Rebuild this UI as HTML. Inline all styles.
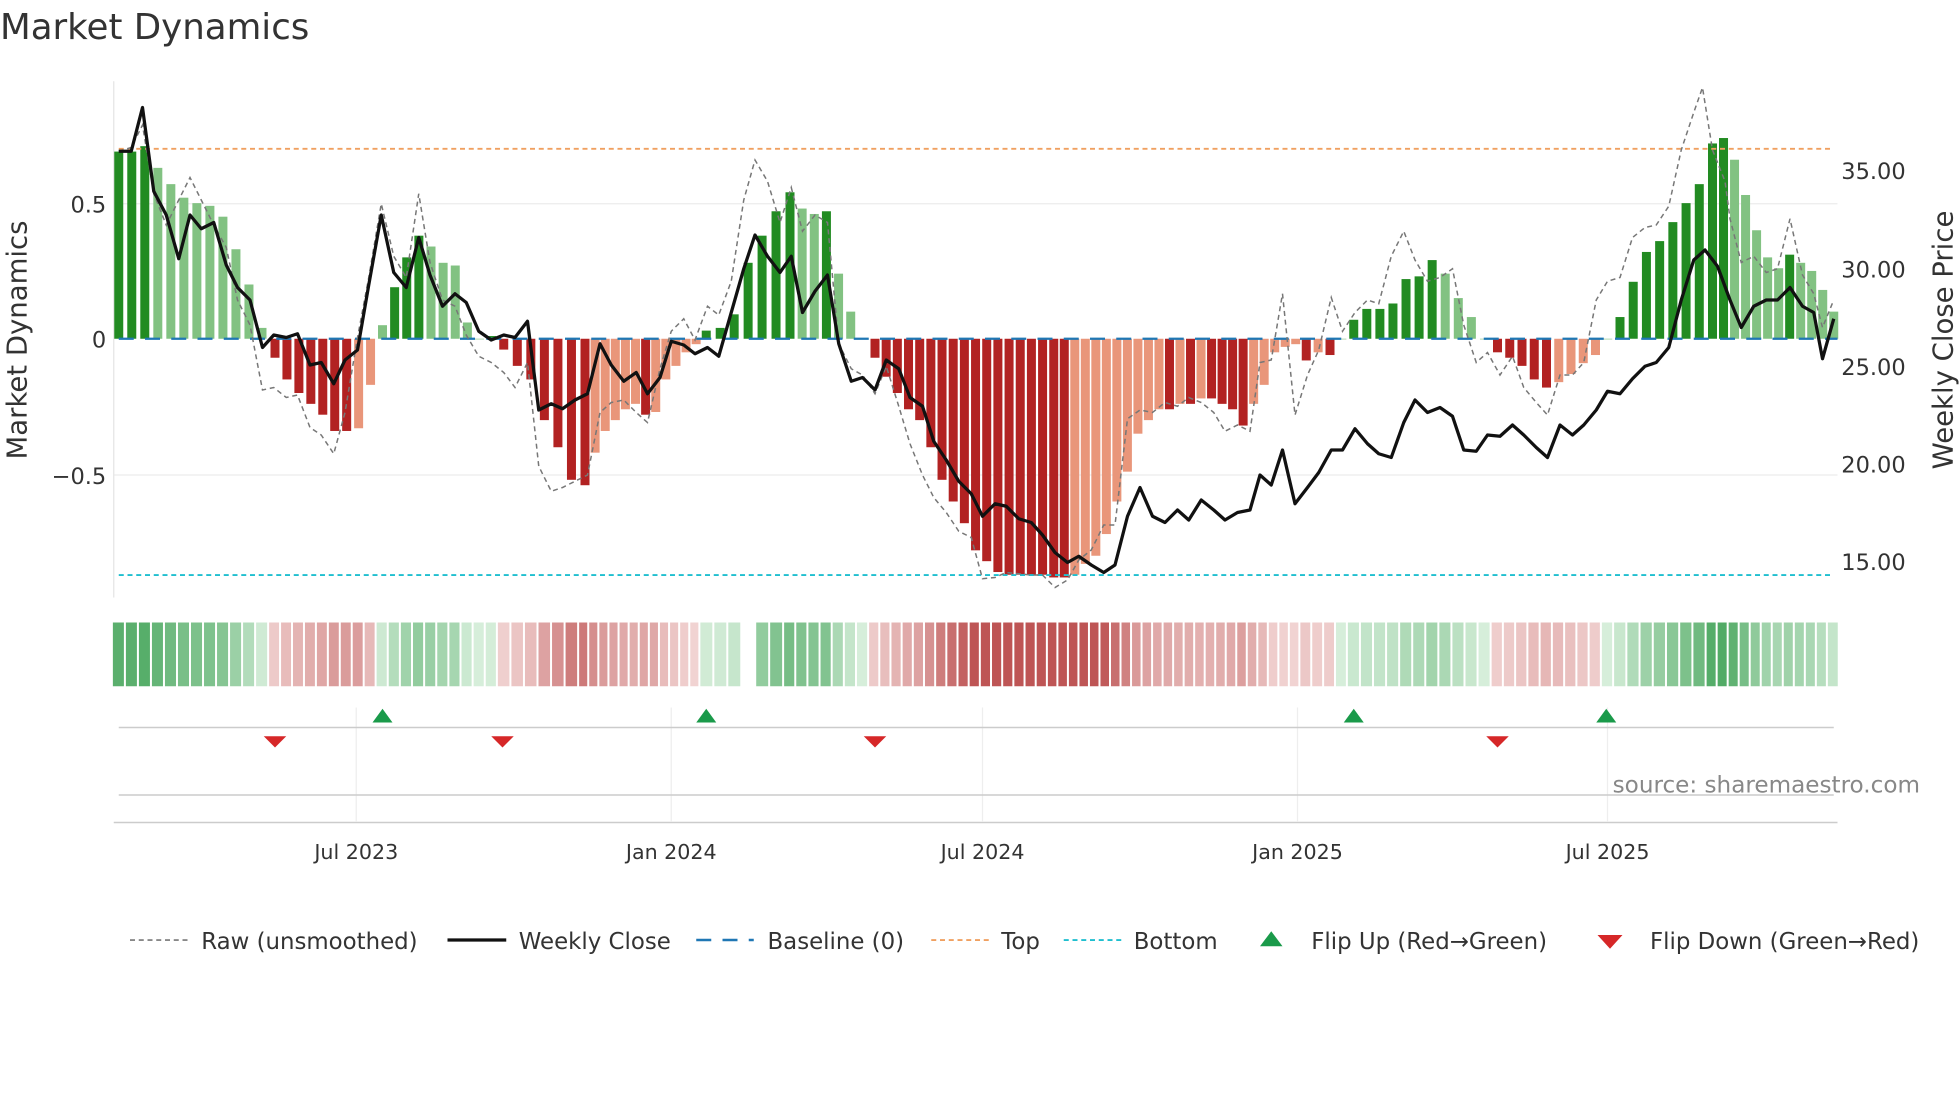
<!DOCTYPE html>
<html><head><meta charset="utf-8">
<style>
html,body{margin:0;padding:0;background:#fff;}
svg{display:block;font-family:"DejaVu Sans","Liberation Sans",sans-serif;}
</style></head>
<body>
<svg id="c" width="1960" height="1102" viewBox="0 0 1568 881.6" xmlns="http://www.w3.org/2000/svg">
<rect width="1568" height="882" fill="#fff"/>
<text x="0" y="31" font-size="28.5" fill="#333">Market Dynamics</text>
<g stroke="#ececec" stroke-width="1">
<line x1="91" y1="163" x2="1470" y2="163"/>
<line x1="91" y1="380" x2="1470" y2="380"/>
</g>
<line x1="91" y1="65" x2="91" y2="478" stroke="#e4e4e4"/>
<g id="bars"></g>
<line x1="95" y1="271" x2="1470" y2="271" stroke="#1f77b4" stroke-width="1.8" stroke-dasharray="12,9"/>
<line x1="95" y1="119" x2="1465" y2="119" stroke="#f0a060" stroke-width="1.5" stroke-dasharray="4,3"/>
<line x1="95" y1="460" x2="1465" y2="460" stroke="#1fbfcf" stroke-width="1.5" stroke-dasharray="4,3"/>
<polyline id="raw" fill="none" stroke="#777" stroke-width="1.2" stroke-dasharray="4,3"/>
<polyline id="close" fill="none" stroke="#111" stroke-width="2.6" stroke-linejoin="round"/>
<g font-size="18" fill="#333" text-anchor="end">
<text x="85" y="170">0.5</text>
<text x="85" y="278">0</text>
<text x="85" y="387">−0.5</text>
</g>
<text transform="translate(21,272) rotate(-90)" font-size="22" fill="#333" text-anchor="middle">Market Dynamics</text>
<g font-size="18" fill="#333">
<text x="1473" y="143">35.00</text>
<text x="1473" y="222">30.00</text>
<text x="1473" y="300">25.00</text>
<text x="1473" y="378">20.00</text>
<text x="1473" y="456">15.00</text>
</g>
<text transform="translate(1562,272) rotate(-90)" font-size="22" fill="#333" text-anchor="middle">Weekly Close Price</text>
<g id="heat"></g>
<g stroke="#eee">
<line x1="285" y1="566" x2="285" y2="657"/><line x1="537" y1="566" x2="537" y2="657"/>
<line x1="786" y1="566" x2="786" y2="657"/><line x1="1038" y1="566" x2="1038" y2="657"/>
<line x1="1286" y1="566" x2="1286" y2="657"/>
</g>
<line x1="95" y1="582" x2="1467" y2="582" stroke="#ccc" stroke-width="1.2"/>
<line x1="95" y1="636" x2="1467" y2="636" stroke="#ccc" stroke-width="1.2"/>
<line x1="91" y1="658" x2="1470" y2="658" stroke="#ccc" stroke-width="1.2"/>
<g fill="#1a9a4a">
<polygon points="298,578 306,567 314,578"/><polygon points="557,578 565,567 573,578"/>
<polygon points="1075,578 1083,567 1091,578"/><polygon points="1277,578 1285,567 1293,578"/>
</g>
<g fill="#d62728">
<polygon points="211,589 229,589 220,598"/><polygon points="393,589 411,589 402,598"/>
<polygon points="691,589 709,589 700,598"/><polygon points="1189,589 1207,589 1198,598"/>
</g>
<text x="1536" y="634" font-size="18.5" fill="#888" text-anchor="end">source: sharemaestro.com</text>
<g font-size="16.5" fill="#333" text-anchor="middle">
<text x="285" y="687">Jul 2023</text><text x="537" y="687">Jan 2024</text>
<text x="786" y="687">Jul 2024</text><text x="1038" y="687">Jan 2025</text>
<text x="1286" y="687">Jul 2025</text>
</g>
<g font-size="18.3" fill="#333">
<line x1="104" y1="752" x2="150" y2="752" stroke="#777" stroke-width="1.3" stroke-dasharray="4,3"/>
<text x="161" y="759">Raw (unsmoothed)</text>
<line x1="358" y1="752" x2="405" y2="752" stroke="#111" stroke-width="2.6"/>
<text x="415" y="759">Weekly Close</text>
<line x1="557" y1="752" x2="603" y2="752" stroke="#1f77b4" stroke-width="2" stroke-dasharray="12,9"/>
<text x="614" y="759">Baseline (0)</text>
<line x1="745" y1="752" x2="791" y2="752" stroke="#f0a060" stroke-width="1.5" stroke-dasharray="4,3"/>
<text x="801" y="759">Top</text>
<line x1="851" y1="752" x2="897" y2="752" stroke="#1fbfcf" stroke-width="1.5" stroke-dasharray="4,3"/>
<text x="907" y="759">Bottom</text>
<polygon points="1008,757 1017,745 1026,757" fill="#1a9a4a"/>
<text x="1049" y="759">Flip Up (Red→Green)</text>
<polygon points="1278,748 1298,748 1288,759" fill="#d62728"/>
<text x="1320" y="759">Flip Down (Green→Red)</text>
</g>
</svg>
<script>
var v=[0.69,0.69,0.71,0.63,0.57,0.52,0.5,0.49,0.45,0.33,0.2,0.04,-0.07,-0.15,-0.2,-0.24,-0.28,-0.34,-0.34,-0.33,-0.17,0.05,0.19,0.3,0.38,0.34,0.28,0.27,0.06,0.0,0.01,-0.04,-0.1,-0.15,-0.3,-0.4,-0.52,-0.54,-0.42,-0.34,-0.3,-0.26,-0.24,-0.28,-0.27,-0.15,-0.1,-0.05,-0.02,0.03,0.04,0.09,0.28,0.38,0.47,0.54,0.48,0.46,0.47,0.24,0.1,0.0,-0.07,-0.14,-0.2,-0.26,-0.3,-0.4,-0.52,-0.6,-0.68,-0.78,-0.82,-0.86,-0.87,-0.87,-0.87,-0.87,-0.88,-0.88,-0.87,-0.83,-0.8,-0.72,-0.6,-0.49,-0.35,-0.3,-0.26,-0.26,-0.24,-0.24,-0.22,-0.22,-0.24,-0.26,-0.32,-0.24,-0.17,-0.05,-0.03,-0.02,-0.08,-0.05,-0.06,0.0,0.07,0.11,0.11,0.13,0.22,0.23,0.29,0.24,0.15,0.08,0.0,-0.05,-0.07,-0.1,-0.15,-0.18,-0.16,-0.13,-0.09,-0.06,0.0,0.08,0.21,0.32,0.36,0.43,0.5,0.57,0.72,0.74,0.66,0.53,0.4,0.3,0.26,0.31,0.28,0.25,0.18,0.1];
var A=[[0,95],[12,220],[21,306],[31,403],[37,468],[49,565],[55,632],[62,700],[78,843],[102,1045],[106,1083],[117,1198],[127,1296],[134,1370],[145,1467]];
function px(i){for(var k=0;k<A.length-1;k++){if(i<=A[k+1][0]){var a=A[k],c=A[k+1];return a[1]+(c[1]-a[1])*(i-a[0])/(c[0]-a[0]);}}return 1467;}
var NS="http://www.w3.org/2000/svg",b=document.getElementById('bars'),h=document.getElementById('heat');
function mix(a,c,t){return 'rgb('+a.map(function(x,i){return Math.round(x+(c[i]-x)*t)}).join(',')+')';}
for(var i=0;i<v.length;i++){
 var x=px(i),val=v[i],pv=i?v[i-1]:0,dark=Math.abs(val)>=Math.abs(pv);
 var y0=271,y1=271-val*217,r=document.createElementNS(NS,'rect');
 r.setAttribute('x',x-3.6);r.setAttribute('width',7.2);
 r.setAttribute('y',Math.min(y0,y1));r.setAttribute('height',Math.max(0.5,Math.abs(y1-y0)));
 r.setAttribute('fill',val>=0?(dark?'#228b22':'#82c282'):(dark?'#b22222':'#e9967a'));
 b.appendChild(r);
 if(i==52) continue;
 var t=Math.min(1,Math.abs(val)/0.75),hr=document.createElementNS(NS,'rect');
 var w=(i<v.length-1?px(i+1)-x:9.5)-1.6;
 hr.setAttribute('x',x-4.7);hr.setAttribute('width',Math.max(6,w));hr.setAttribute('y',498);hr.setAttribute('height',51);
 hr.setAttribute('fill',val>=0?mix([214,238,218],[80,170,100],t):mix([242,214,213],[190,85,85],t));
 h.appendChild(hr);
}
document.getElementById('close').setAttribute('points',"95,121 105,121 114,86 123,153 133,172 143,207 152,172 161,183 171,178 181,212 190,230 200,240 210,278 219,268 229,270 238,267 248,292 257,290 267,307 276,288 286,280 295,228 305,172 315,218 325,230 335,190 344,220 354,245 364,235 373,242 383,265 393,272 403,268 412,270 422,257 431,328 441,323 450,327 460,320 470,315 480,275 489,292 499,305 509,298 518,315 528,302 537,273 547,276 556,283 566,278 575,285 585,250 595,215 604,188 614,205 624,218 633,205 642,250 652,233 662,220 671,275 681,305 690,302 700,312 709,288 719,295 728,318 738,325 747,353 757,368 767,385 777,395 786,413 796,403 805,405 815,415 825,418 834,428 844,442 854,450 863,445 873,452 883,458 892,452 902,413 912,390 922,413 932,418 942,408 951,416 961,400 971,408 980,416 990,410 1000,408 1008,380 1017,388 1026,360 1036,403 1046,390 1055,378 1065,360 1074,360 1084,343 1094,355 1103,363 1113,366 1123,338 1132,320 1142,330 1152,326 1162,333 1171,360 1181,361 1190,348 1200,349 1210,340 1219,348 1229,358 1238,366 1248,340 1258,348 1267,340 1277,328 1286,313 1296,315 1306,303 1316,293 1325,290 1335,278 1345,240 1355,208 1364,200 1374,213 1384,240 1393,262 1403,245 1413,240 1422,240 1432,230 1442,245 1451,250 1458,287 1467,255");
document.getElementById('raw').setAttribute('points',"95,121 105,118 114,100 123,155 133,180 143,160 152,142 161,160 171,180 181,198 190,240 200,260 210,312 219,310 229,318 238,316 248,342 257,348 267,363 276,330 286,270 295,222 305,163 315,205 325,222 335,155 344,210 354,240 364,245 373,268 383,285 393,290 403,298 412,310 422,290 431,373 441,393 450,390 460,385 470,380 480,330 489,322 499,320 509,330 518,338 528,295 537,265 547,255 556,272 566,245 575,252 585,225 595,160 604,128 614,145 624,178 633,150 642,185 652,172 662,178 671,275 681,295 690,300 700,315 709,293 719,325 728,355 738,380 747,398 757,410 767,425 777,430 786,463 796,462 805,458 815,459 825,460 834,460 844,470 854,464 863,448 873,440 883,420 892,420 902,335 912,328 922,330 932,322 942,325 951,318 961,322 971,330 980,345 990,340 1000,345 1008,290 1017,288 1026,235 1036,332 1046,300 1055,280 1065,238 1074,265 1084,250 1094,240 1103,243 1113,205 1123,185 1132,208 1142,225 1152,222 1162,215 1171,260 1181,290 1190,282 1200,300 1210,285 1219,310 1229,322 1238,332 1248,300 1258,300 1267,290 1277,240 1286,225 1296,222 1306,190 1316,182 1325,180 1335,165 1345,120 1355,90 1362,70 1370,120 1380,145 1384,175 1393,210 1403,205 1413,218 1422,215 1432,175 1442,220 1451,235 1458,262 1467,240");
</script>
</body></html>
